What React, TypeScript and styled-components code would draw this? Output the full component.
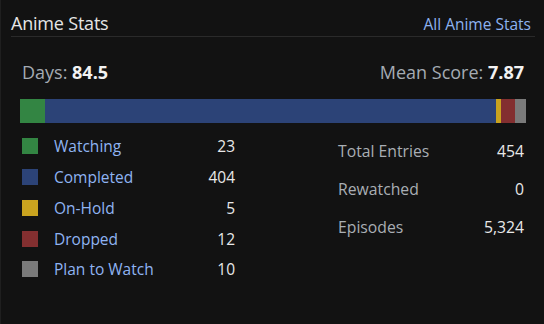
import React from "react";
import styled, { createGlobalStyle } from "styled-components";

const Global = createGlobalStyle`
  html, body { margin: 0; padding: 0; background: #121212; }
  body { font-family: "Open Sans", "Noto Sans", sans-serif; }
`;

const Card = styled.div`
  box-sizing: border-box;
  width: 544px;
  height: 324px;
  background: #121212;
  border-left: 1px solid #1f1f1f;
  color: #dcdcdc;
`;

const Header = styled.div`
  display: flex;
  justify-content: space-between;
  align-items: baseline;
  margin: 0 9px 0 10px;
  padding-top: 11px;
  height: 25px;
  border-bottom: 1px solid #2a2a2a;
`;

const Title = styled.h2`
  margin: 0;
  font-size: 18px;
  line-height: 24px;
  font-weight: 400;
  color: #e6e6e6;
  letter-spacing: -0.2px;
`;

const Link = styled.a`
  font-size: 15.5px;
  color: #8db2f0;
  text-decoration: none;
  margin-right: 4px;
`;

const Summary = styled.div`
  display: flex;
  justify-content: space-between;
  align-items: baseline;
  margin: 23px 20px 0 21px;
  font-size: 18px;
  line-height: 24px;
`;

const SumLabel = styled.span`
  color: #a4abb3;
`;

const SumValue = styled.span`
  color: #f2f2f2;
  font-weight: 700;
`;

const Bar = styled.div`
  display: flex;
  height: 24px;
  margin: 15px 18px 0 19px;
`;

const Seg = styled.div<{ $c: string }>`
  background: ${(p) => p.$c};
  height: 100%;
`;

const Body = styled.div`
  display: grid;
  grid-template-columns: 213px 186px;
  column-gap: 103px;
  margin: 8px 0 0 21px;
`;

const Legend = styled.div`
  display: flex;
  flex-direction: column;
`;

const LegendRow = styled.div`
  display: flex;
  align-items: center;
  height: 30.75px;
  font-size: 15.5px;
`;

const Swatch = styled.span<{ $c: string }>`
  width: 16px;
  height: 16px;
  background: ${(p) => p.$c};
  margin-right: 16px;
  flex: none;
`;

const LegendLabel = styled.span`
  color: #8fb4f2;
  flex: 1;
`;

const Num = styled.span`
  color: #e8e8e8;
`;

const Stats = styled.div`
  display: flex;
  flex-direction: column;
  padding-top: 1px;
`;

const StatRow = styled.div`
  display: flex;
  justify-content: space-between;
  align-items: center;
  height: 38px;
  font-size: 15.75px;
`;

const StatLabel = styled.span`
  color: #a9aeb4;
`;

const segs = [
  { c: "#338543", w: 25 },
  { c: "#2c4377", w: 451 },
  { c: "#c9a31f", w: 5 },
  { c: "#832f30", w: 14 },
  { c: "#7a7a7a", w: 11 },
];

const legend = [
  { c: "#338543", l: "Watching", n: "23" },
  { c: "#2c4377", l: "Completed", n: "404" },
  { c: "#c9a31f", l: "On-Hold", n: "5" },
  { c: "#832f30", l: "Dropped", n: "12" },
  { c: "#7a7a7a", l: "Plan to Watch", n: "10" },
];

const stats = [
  { l: "Total Entries", n: "454" },
  { l: "Rewatched", n: "0" },
  { l: "Episodes", n: "5,324" },
];

export default function App() {
  const total = segs.reduce((a, s) => a + s.w, 0);
  return (
    <>
      <Global />
      <Card>
        <Header>
          <Title>Anime Stats</Title>
          <Link href="#">All Anime Stats</Link>
        </Header>
        <Summary>
          <span>
            <SumLabel>Days: </SumLabel>
            <SumValue>84.5</SumValue>
          </span>
          <span>
            <SumLabel>Mean Score: </SumLabel>
            <SumValue>7.87</SumValue>
          </span>
        </Summary>
        <Bar>
          {segs.map((s, i) => (
            <Seg key={i} $c={s.c} style={{ width: `${(s.w / total) * 100}%` }} />
          ))}
        </Bar>
        <Body>
          <Legend>
            {legend.map((r) => (
              <LegendRow key={r.l}>
                <Swatch $c={r.c} />
                <LegendLabel>{r.l}</LegendLabel>
                <Num>{r.n}</Num>
              </LegendRow>
            ))}
          </Legend>
          <Stats>
            {stats.map((r) => (
              <StatRow key={r.l}>
                <StatLabel>{r.l}</StatLabel>
                <Num>{r.n}</Num>
              </StatRow>
            ))}
          </Stats>
        </Body>
      </Card>
    </>
  );
}
